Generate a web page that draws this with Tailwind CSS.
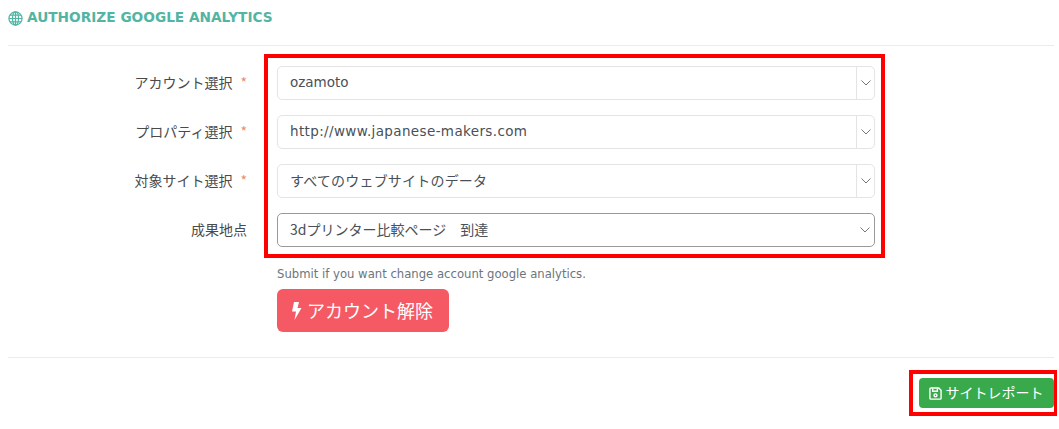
<!DOCTYPE html>
<html lang="ja"><head><meta charset="utf-8">
<script src="https://cdn.jsdelivr.net/npm/@tailwindcss/browser@4"></script>
</head>
<body class="bg-white">
<div class="relative w-[1059px] h-[429px] overflow-hidden pl-2 pr-[5px] font-['Noto_Sans_CJK_JP',sans-serif] text-[#495057]">
  <div class="h-[45px] pt-[8px] flex items-start gap-[4px] text-[13.700px] leading-[18px] font-bold text-[#52b5a3]">
    <svg class="mt-[3px]" width="15" height="15" viewBox="0 0 16 16" fill="none" stroke="#52b5a3" stroke-width="1.3"><circle cx="8" cy="8" r="7"/><ellipse cx="8" cy="8" rx="3.2" ry="7"/><path d="M8 1v14M1 8h14M2 4.500h12M2 11.500h12"/></svg>
    <span class="font-['DejaVu_Sans',sans-serif]">AUTHORIZE GOOGLE ANALYTICS</span>
  </div>
  <div class="h-px bg-[#ececec]"></div>

  <div class="pt-5 flex flex-col gap-[15px] text-sm">
    <div class="flex items-center h-[34px]">
      <div class="w-[239px] text-right text-[#4a4a4a] leading-[18px] -mt-0.5">アカウント選択<span class="text-[#ee8a6a] ml-[8px]">*</span></div>
      <div class="ml-[30px] w-[598px] h-[34px] flex items-stretch border border-[#e4e4e4] rounded-[5px]">
        <div class="flex-1 pl-3 leading-[30px] font-['DejaVu_Sans','Noto_Sans_CJK_JP',sans-serif] text-[13.500px]">ozamoto</div>
        <div class="w-[18px] border-l border-[#e4e4e4] flex items-center justify-center"><svg width="10" height="6" viewBox="0 0 10 6" fill="none" stroke="#777" stroke-width="1"><path d="M0.500 0.500 5 5l4.500-4.500"/></svg></div>
      </div>
    </div>
    <div class="flex items-center h-[34px]">
      <div class="w-[239px] text-right text-[#4a4a4a] leading-[18px] -mt-0.5">プロパティ選択<span class="text-[#ee8a6a] ml-[8px]">*</span></div>
      <div class="ml-[30px] w-[598px] h-[34px] flex items-stretch border border-[#e4e4e4] rounded-[5px]">
        <div class="flex-1 pl-3 leading-[30px] font-['DejaVu_Sans','Noto_Sans_CJK_JP',sans-serif] text-[13.500px] tracking-[0.37px]">http://www.japanese-makers.com</div>
        <div class="w-[18px] border-l border-[#e4e4e4] flex items-center justify-center"><svg width="10" height="6" viewBox="0 0 10 6" fill="none" stroke="#777" stroke-width="1"><path d="M0.500 0.500 5 5l4.500-4.500"/></svg></div>
      </div>
    </div>
    <div class="flex items-center h-[34px]">
      <div class="w-[239px] text-right text-[#4a4a4a] leading-[18px] -mt-0.5">対象サイト選択<span class="text-[#ee8a6a] ml-[8px]">*</span></div>
      <div class="ml-[30px] w-[598px] h-[34px] flex items-stretch border border-[#e4e4e4] rounded-[5px]">
        <div class="flex-1 pl-3 leading-[30px] tracking-[0.2px]">すべてのウェブサイトのデータ</div>
        <div class="w-[18px] border-l border-[#e4e4e4] flex items-center justify-center"><svg width="10" height="6" viewBox="0 0 10 6" fill="none" stroke="#777" stroke-width="1"><path d="M0.500 0.500 5 5l4.500-4.500"/></svg></div>
      </div>
    </div>
    <div class="flex items-center h-[34px]">
      <div class="w-[239px] text-right text-[#4a4a4a] leading-[18px] -mt-0.5">成果地点</div>
      <div class="ml-[30px] w-[598px] h-[34px] flex items-stretch border border-[#999] rounded-[5px]">
        <div class="flex-1 pl-3 leading-[30px]">3dプリンター比較ページ　到達</div>
        <div class="w-[18px] flex items-center justify-center"><svg width="10" height="6" viewBox="0 0 10 6" fill="none" stroke="#777" stroke-width="1"><path d="M0.500 0.500 5 5l4.500-4.500"/></svg></div>
      </div>
    </div>
  </div>

  <div class="ml-[269px] mt-[18px] leading-[18px] text-[#6c757d] font-['DejaVu_Sans',sans-serif] text-[11.650px]">Submit if you want change account google analytics.</div>
  <div class="ml-[269px] mt-[6px] w-[172px] h-[43px] rounded-[6px] bg-[#f55a64] text-white flex items-center justify-center gap-[5px] text-lg pr-0.5">
    <svg width="11" height="18" viewBox="0 0 11 18" fill="#fff"><path d="M3 0h5L6.500 6H10.500L3.500 18 5 9.500H1z"/></svg>
    <span class="-mt-0.5">アカウント解除</span>
  </div>
  <div class="h-px bg-[#ececec] mt-[25px]"></div>
  <div class="flex justify-end mt-5">
    <div class="w-[135px] h-[30px] rounded-[4px] bg-[#38aa4c] text-white flex items-center justify-center gap-[4px] text-sm pr-px">
      <svg width="13" height="13" viewBox="0 0 14 14" fill="none" stroke="#fff" stroke-width="1.500"><path d="M1 2a1 1 0 0 1 1-1h8.500L13 3.500V12a1 1 0 0 1-1 1H2a1 1 0 0 1-1-1z"/><path d="M4 1.500v3h5v-3"/><circle cx="7" cy="9" r="1.600"/></svg>
      <span class="-mt-0.5">サイトレポート</span>
    </div>
  </div>

  <div class="absolute left-[264px] top-[54px] w-[621px] h-[204px] border-4 border-[#ff0000]"></div>
  <div class="absolute left-[909px] top-[370px] w-[148px] h-[46px] border-4 border-r-[3px] border-[#ff0000]"></div>
</div>
</body></html>
